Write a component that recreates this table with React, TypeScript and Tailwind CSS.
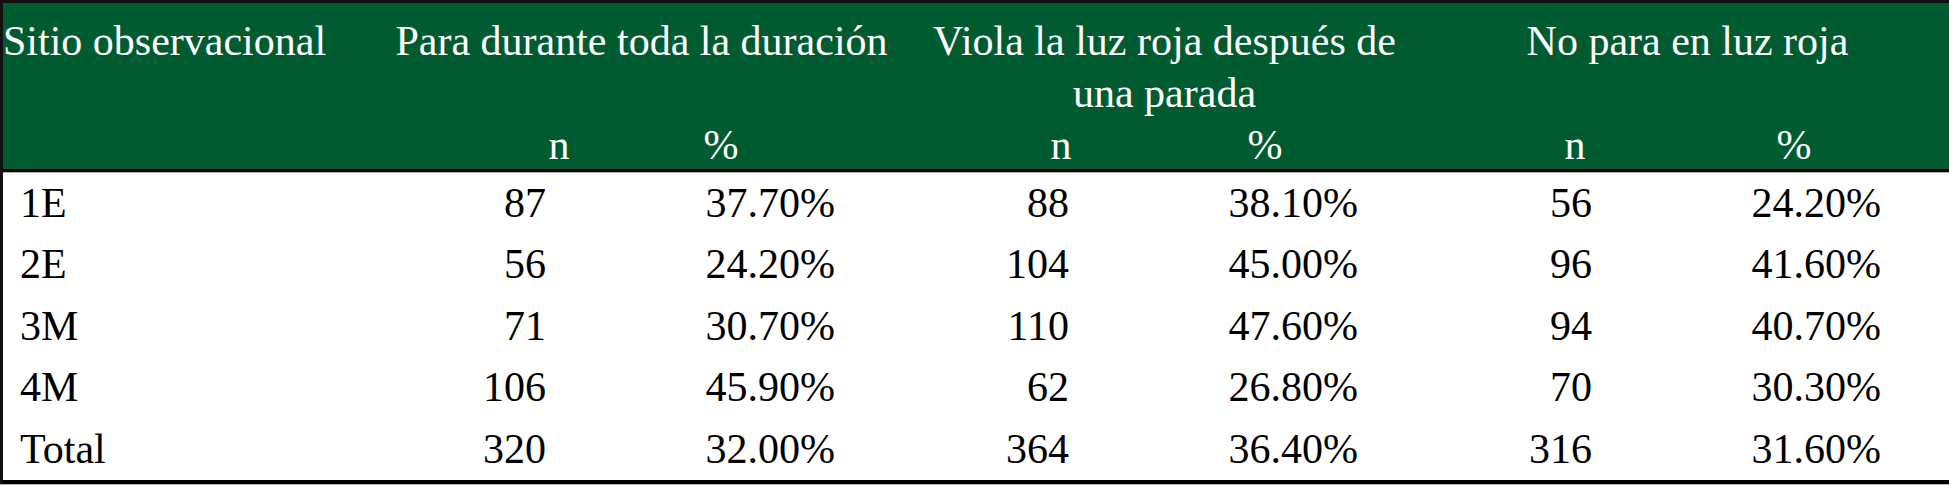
const groups = [
  { title: "Para durante toda la duración", n: "pl-[97px]", pct: "pr-[102px]" },
  { title: "Viola la luz roja después de", second: "una parada", n: "pl-[55px]", pct: "pr-[60px]" },
  { title: "No para en luz roja", n: "pl-[37px]", pct: "pr-[48px]" },
];

const rows = [
  ["1E", "87", "37.70%", "88", "38.10%", "56", "24.20%"],
  ["2E", "56", "24.20%", "104", "45.00%", "96", "41.60%"],
  ["3M", "71", "30.70%", "110", "47.60%", "94", "40.70%"],
  ["4M", "106", "45.90%", "62", "26.80%", "70", "30.30%"],
  ["Total", "320", "32.00%", "364", "36.40%", "316", "31.60%"],
];

const cols = "grid grid-cols-[377px_261px_262px_261px_262px_261px_262px]";

export default function App() {
  return (
    <div className="h-[486px] w-[1949px] bg-white font-['Liberation_Serif',serif] text-[42px]">
      <div className="border-l-[3px] border-t-[3px] border-[#111]">
        <div
          className={`${cols} grid-rows-[119px_47px] border-b-[3px] border-black bg-[#005b30] text-white`}
        >
          <div className="row-span-2 whitespace-nowrap pt-[12px] leading-[52px]">
            Sitio observacional
          </div>
          {groups.map((g) => (
            <div key={g.title} className="col-span-2 whitespace-nowrap pt-[12px] text-center leading-[52px]">
              {g.title}
              {g.second ? (
                <>
                  <br />
                  {g.second}
                </>
              ) : null}
            </div>
          ))}
          {groups.map((g) => (
            <div key={g.title + "-sub"} className="contents">
              <div className={`${g.n} text-center leading-[47px]`}>n</div>
              <div className={`${g.pct} text-center leading-[47px]`}>%</div>
            </div>
          ))}
        </div>

        <div className="border-b-4 border-t border-b-black border-t-[#b3b3b3] text-black">
          {rows.map((row) => (
            <div key={row[0]} className={`${cols} leading-[61.4px]`}>
              <div className="pl-[17px]">{row[0]}</div>
              {row.slice(1).map((value, i) => (
                <div key={i} className={i % 2 === 0 ? "pr-[95px] text-right" : "pr-[68px] text-right"}>
                  {value}
                </div>
              ))}
            </div>
          ))}
        </div>
      </div>
      <div className="h-px bg-[#b3b3b3]" />
    </div>
  );
}
